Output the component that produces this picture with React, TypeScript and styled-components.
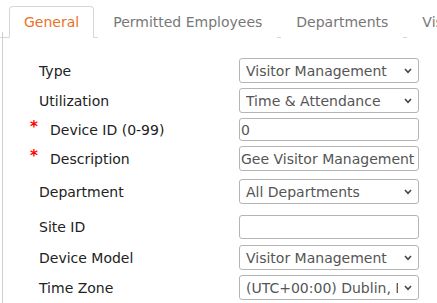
import React from "react";
import styled, { createGlobalStyle } from "styled-components";

const Global = createGlobalStyle`
  html, body { margin: 0; padding: 0; background: #fff; }
  body { font-family: "DejaVu Sans", "Liberation Sans", sans-serif; }
`;

const Page = styled.div`
  width: 437px;
  height: 303px;
  overflow: hidden;
  position: relative;
`;

const TabBar = styled.div`
  display: flex;
  align-items: flex-end;
  height: 38px;
  padding-left: 9px;
  border-bottom: 1px solid #d6d6d6;
  box-sizing: border-box;
  white-space: nowrap;
`;

const Tab = styled.div<{ $active?: boolean }>`
  flex: none;
  height: 32px;
  box-sizing: border-box;
  padding: 0 14px;
  margin-right: 4px;
  margin-bottom: -1px;
  display: flex;
  align-items: center;
  font-size: 14px;
  color: ${(p) => (p.$active ? "#ea7126" : "#777")};
  background: #fff;
  border: 1px solid ${(p) => (p.$active ? "#d6d6d6" : "transparent")};
  border-bottom: 1px solid ${(p) => (p.$active ? "#fff" : "transparent")};
  border-radius: 4px 4px 0 0;
`;

const Panel = styled.div`
  margin-left: 2px;
  margin-top: -6px;
  padding-top: 26px;
  border-left: 1px solid #cfcfcf;
  height: 300px;
  box-sizing: border-box;
  display: flex;
  flex-direction: column;
`;

const Row = styled.div<{ $mt: number }>`
  display: grid;
  grid-template-columns: 236px 180px;
  align-items: center;
  margin-top: ${(p) => p.$mt}px;
`;

const Label = styled.div<{ $req?: boolean }>`
  font-size: 14px;
  color: #222;
  padding-left: ${(p) => (p.$req ? "27px" : "36px")};
  display: flex;
  align-items: center;
`;

const Star = styled.span`
  color: #ff0000;
  font-size: 15px;
  font-weight: bold;
  width: 20px;
  position: relative;
  top: -3px;
`;

const TextInput = styled.input<{ $h: number }>`
  width: 180px;
  height: ${(p) => p.$h}px;
  box-sizing: border-box;
  border: 1px solid #b5b5b5;
  border-radius: 3px;
  padding: 0 1px;
  font-family: "DejaVu Sans", sans-serif;
  font-size: 14px;
  color: #555;
  background: #fff;
  outline: none;
`;

const SelectWrap = styled.div`
  position: relative;
  width: 180px;
  height: 25px;
`;

const Select = styled.select`
  appearance: none;
  -webkit-appearance: none;
  width: 180px;
  height: 25px;
  box-sizing: border-box;
  border: 1px solid #b5b5b5;
  border-radius: 3px;
  padding: 0 20px 0 6px;
  font-family: "DejaVu Sans", sans-serif;
  font-size: 14px;
  color: #555;
  background: #fff;
  outline: none;
`;

const Chevron = styled.svg`
  position: absolute;
  right: 7px;
  top: 10px;
  pointer-events: none;
`;

function Dropdown({ value }: { value: string }) {
  return (
    <SelectWrap>
      <Select defaultValue={value}>
        <option>{value}</option>
      </Select>
      <Chevron width="8" height="6" viewBox="0 0 8 6">
        <polyline points="1,1 4,4.3 7,1" fill="none" stroke="#444" strokeWidth="1.6" />
      </Chevron>
    </SelectWrap>
  );
}

export default function App() {
  return (
    <Page>
      <Global />
      <TabBar>
        <Tab $active>General</Tab>
        <Tab>Permitted Employees</Tab>
        <Tab>Departments</Tab>
        <Tab>Visitors</Tab>
      </TabBar>
      <Panel>
        <Row $mt={0}>
          <Label>Type</Label>
          <Dropdown value="Visitor Management" />
        </Row>
        <Row $mt={5}>
          <Label>Utilization</Label>
          <Dropdown value="Time &amp; Attendance" />
        </Row>
        <Row $mt={5}>
          <Label $req><Star>*</Star>Device ID (0-99)</Label>
          <TextInput $h={23} defaultValue="0" />
        </Row>
        <Row $mt={5}>
          <Label $req><Star>*</Star>Description</Label>
          <TextInput $h={25} defaultValue="Gee Visitor Management" />
        </Row>
        <Row $mt={8}>
          <Label>Department</Label>
          <Dropdown value="All Departments" />
        </Row>
        <Row $mt={11}>
          <Label>Site ID</Label>
          <TextInput $h={24} defaultValue="" />
        </Row>
        <Row $mt={6}>
          <Label>Device Model</Label>
          <Dropdown value="Visitor Management" />
        </Row>
        <Row $mt={5}>
          <Label>Time Zone</Label>
          <Dropdown value="(UTC+00:00) Dublin, Edinburgh, Lisbon, London" />
        </Row>
      </Panel>
    </Page>
  );
}
